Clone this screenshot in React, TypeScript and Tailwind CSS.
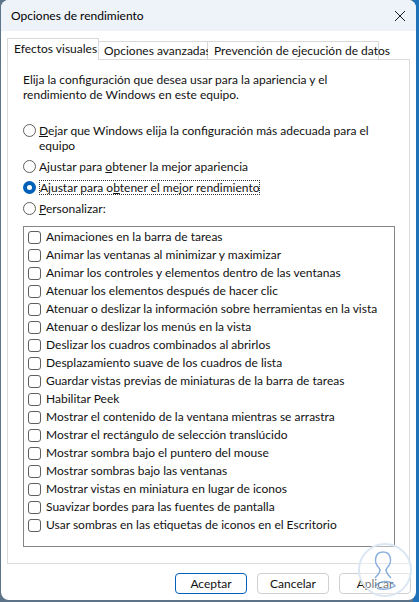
import React from "react";

const font = { fontFamily: 'Lato, "Noto Sans", sans-serif' };

function Check({ label }: { label: string }) {
  return (
    <div className="flex items-center h-[18px] pl-[4px]">
      <div className="w-[13px] h-[13px] rounded-[3px] border border-[#5f5f5f] bg-white shrink-0" />
      <span className="ml-[5px] whitespace-nowrap">{label}</span>
    </div>
  );
}

function Radio({ checked, children }: { checked?: boolean; children: React.ReactNode }) {
  return (
    <div className="flex items-start">
      {checked ? (
        <div className="mt-[1px] w-[13px] h-[13px] rounded-full bg-[#005fb8] flex items-center justify-center shrink-0">
          <div className="w-[5px] h-[5px] rounded-full bg-white" />
        </div>
      ) : (
        <div className="mt-[1px] w-[13px] h-[13px] rounded-full border border-[#5f5f5f] bg-white shrink-0" />
      )}
      <div className="ml-[3px] leading-[15px] whitespace-nowrap">{children}</div>
    </div>
  );
}

const items = [
  "Animaciones en la barra de tareas",
  "Animar las ventanas al minimizar y maximizar",
  "Animar los controles y elementos dentro de las ventanas",
  "Atenuar los elementos después de hacer clic",
  "Atenuar o deslizar la información sobre herramientas en la vista",
  "Atenuar o deslizar los menús en la vista",
  "Deslizar los cuadros combinados al abrirlos",
  "Desplazamiento suave de los cuadros de lista",
  "Guardar vistas previas de miniaturas de la barra de tareas",
  "Habilitar Peek",
  "Mostrar el contenido de la ventana mientras se arrastra",
  "Mostrar el rectángulo de selección translúcido",
  "Mostrar sombra bajo el puntero del mouse",
  "Mostrar sombras bajo las ventanas",
  "Mostrar vistas en miniatura en lugar de iconos",
  "Suavizar bordes para las fuentes de pantalla",
  "Usar sombras en las etiquetas de iconos en el Escritorio",
];

export default function App() {
  return (
    <div className="w-[419px] h-[602px] bg-[#5d7488] relative overflow-hidden" style={font}>
      <div className="absolute right-0 top-0 w-[6px] h-[602px] bg-[#1f72b8]" />
      <div className="relative ml-[1px] w-[415px] h-[600px] bg-white rounded-t-[8px] rounded-b-[8px] overflow-hidden text-[12px] text-[#111]">
        {/* title bar */}
        <div className="h-[31px] bg-[#eef3f9] flex items-center justify-between pl-[10px] pr-[8px]">
          <span className="text-[12px] text-black whitespace-nowrap">Opciones de rendimiento</span>
          <svg width="12" height="12" viewBox="0 0 12 12" className="mr-[2px]">
            <path d="M1 1 L11 11 M11 1 L1 11" stroke="#1a1a1a" strokeWidth="1" />
          </svg>
        </div>
        {/* tabs */}
        <div className="pl-[6px] pt-[7px] flex items-end h-[28px] relative z-10">
          <div className="h-[22px] w-[92px] pl-[6px] border border-b-0 border-[#d9d9d9] bg-white flex items-center -mb-[1px] pb-[2px] whitespace-nowrap">
            Efectos visuales
          </div>
          <div className="h-[18px] w-[109px] pl-[5px] border border-l-0 border-b-0 border-[#d9d9d9] bg-white flex items-center whitespace-nowrap">
            Opciones avanzadas
          </div>
          <div className="h-[18px] w-[171px] pl-[6px] border border-l-0 border-b-0 border-[#d9d9d9] bg-white flex items-center whitespace-nowrap">
            Prevención de ejecución de datos
          </div>
        </div>
        {/* pane */}
        <div className="ml-[6px] w-[403px] h-[505px] border border-[#dcdcdc] pl-[15px] pt-[12px]">
          <div className="leading-[15px]">
            Elija la configuración que desea usar para la apariencia y el
            <br />
            rendimiento de Windows en este equipo.
          </div>
          <div className="mt-[21px] flex flex-col gap-[6px]">
            <Radio>
              <span className="underline">D</span>ejar que Windows elija la configuración más adecuada para el
              <br />
              equipo
            </Radio>
            <Radio>
              Ajustar para <span className="underline">o</span>btener la mejor apariencia
            </Radio>
            <Radio checked>
              <span className="outline outline-1 outline-dotted outline-[#333] -outline-offset-1 px-[1px]">
                Ajustar para o<span className="underline">b</span>tener el mejor rendimiento
              </span>
            </Radio>
            <Radio>
              <span className="underline">P</span>ersonalizar:
            </Radio>
          </div>
          <div className="mt-[10px] w-[372px] h-[321px] border border-[#858585] pt-[1px] overflow-hidden">
            {items.map((t) => (
              <Check key={t} label={t} />
            ))}
          </div>
        </div>
        {/* buttons */}
        <div className="flex justify-end gap-[10px] pr-[5px] mt-[9px]">
          <div className="w-[72px] h-[21px] rounded-[4px] border border-[#005fb8] flex items-center justify-center">Aceptar</div>
          <div className="w-[72px] h-[21px] rounded-[4px] border border-[#d0d0d0] flex items-center justify-center">Cancelar</div>
          <div className="w-[72px] h-[21px] rounded-[4px] border border-[#d0d0d0] flex items-center justify-center">Aplicar</div>
        </div>
        {/* watermark */}
        <svg className="absolute left-[356px] top-[542px]" width="56" height="58" viewBox="0 0 56 58">
          <circle cx="28" cy="28" r="26" fill="rgba(255,255,255,0.4)" stroke="#dbe6f3" strokeWidth="2" />
          <path d="M26 10 C18 10 16 20 22 26 C24 28 22 32 18 36 M26 10 C34 10 36 20 30 26 C28 28 30 32 34 36 M18 44 C24 38 34 38 38 44 C32 48 24 48 20 46" fill="none" stroke="#5a8fd0" strokeWidth="1.5" opacity="0.7" />
        </svg>
      </div>
    </div>
  );
}
